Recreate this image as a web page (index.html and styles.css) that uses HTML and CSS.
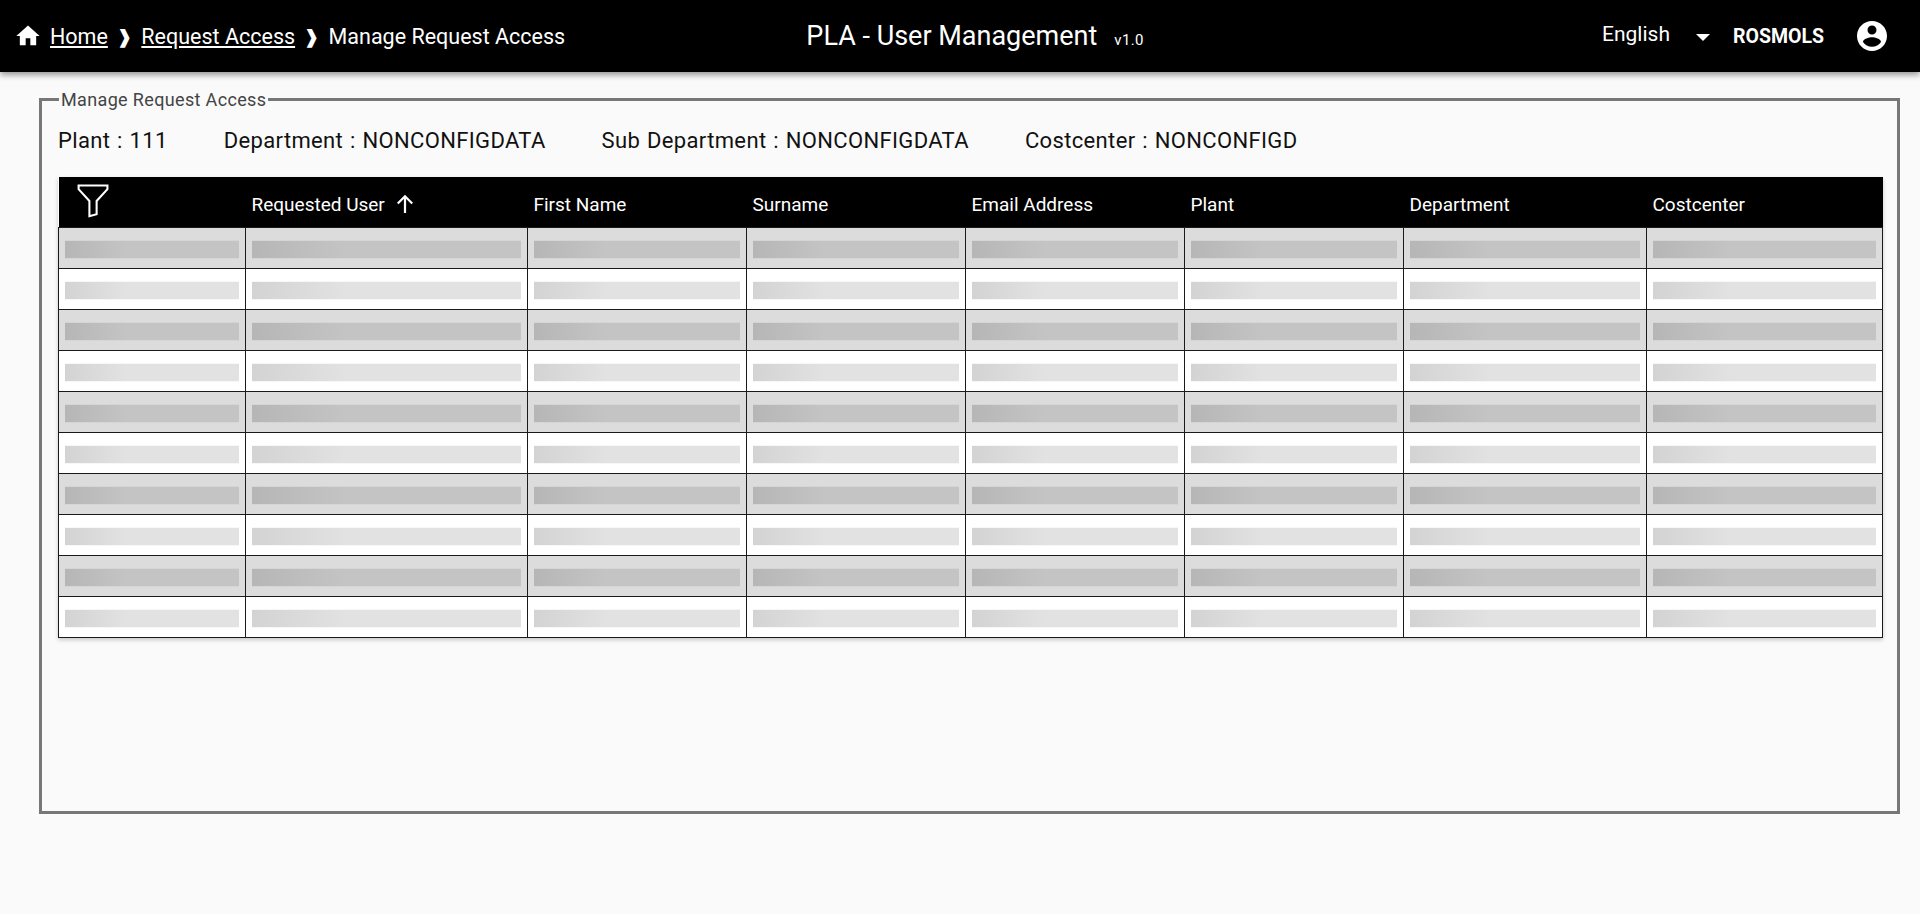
FILE: index.html
```html
<!DOCTYPE html>
<html lang="en">
<head>
<meta charset="utf-8">
<title>PLA - User Management</title>
<link rel="stylesheet" href="styles.css">
</head>
<body>
<header class="topbar">
  <nav class="crumbs">
    <svg class="home" viewBox="0 0 24 24"><path d="M10 20v-6h4v6h5v-8h3L12 3 2 12h3v8z"/></svg>
    <a class="crumb-link" href="#">Home</a>
    <span class="sep">❱</span>
    <a class="crumb-link" href="#">Request Access</a>
    <span class="sep">❱</span>
    <span>Manage Request Access</span>
  </nav>
  <div class="title"><span class="title-main">PLA - User Management</span><span class="version">v1.0</span></div>
  <div class="user">
    <span class="lang">English</span>
    <span class="caret"></span>
    <span class="uname">ROSMOLS</span>
    <svg class="avatar" viewBox="0 0 24 24"><path d="M12 2C6.48 2 2 6.48 2 12s4.480 10 10 10 10-4.480 10-10S17.520 2 12 2zm0 3c1.660 0 3 1.340 3 3s-1.340 3-3 3-3-1.340-3-3 1.340-3 3-3zm0 14.200c-2.500 0-4.710-1.280-6-3.220.03-1.990 4-3.080 6-3.080 1.990 0 5.970 1.090 6 3.080-1.290 1.940-3.500 3.220-6 3.220z"/></svg>
  </div>
</header>
<main class="content">
  <fieldset class="panel">
    <legend class="panel-legend">Manage Request Access</legend>
    <div class="info">
      <span>Plant : 111</span>
      <span>Department : NONCONFIGDATA</span>
      <span>Sub Department : NONCONFIGDATA</span>
      <span>Costcenter : NONCONFIGD</span>
    </div>
    <table class="grid">
      <colgroup>
        <col class="c1"><col class="c2"><col class="c3"><col class="c4"><col class="c5"><col class="c6"><col class="c7"><col class="c8">
      </colgroup>
      <thead>
        <tr>
          <th><svg class="filter" viewBox="0 0 32 34"><path d="M2.500 2.500h28v3.500L20 17.500v12.800l-7 2V17.500L2.500 6z"/></svg></th>
          <th>Requested User <svg class="arrow" viewBox="0 0 18 18"><path d="M9 17V2M2.500 8.500 9 2l6.500 6.500"/></svg></th>
          <th>First Name</th><th>Surname</th><th>Email Address</th><th>Plant</th><th>Department</th><th>Costcenter</th>
        </tr>
      </thead>
      <tbody>
        <tr><td><i></i></td><td><i></i></td><td><i></i></td><td><i></i></td><td><i></i></td><td><i></i></td><td><i></i></td><td><i></i></td></tr>
        <tr><td><i></i></td><td><i></i></td><td><i></i></td><td><i></i></td><td><i></i></td><td><i></i></td><td><i></i></td><td><i></i></td></tr>
        <tr><td><i></i></td><td><i></i></td><td><i></i></td><td><i></i></td><td><i></i></td><td><i></i></td><td><i></i></td><td><i></i></td></tr>
        <tr><td><i></i></td><td><i></i></td><td><i></i></td><td><i></i></td><td><i></i></td><td><i></i></td><td><i></i></td><td><i></i></td></tr>
        <tr><td><i></i></td><td><i></i></td><td><i></i></td><td><i></i></td><td><i></i></td><td><i></i></td><td><i></i></td><td><i></i></td></tr>
        <tr><td><i></i></td><td><i></i></td><td><i></i></td><td><i></i></td><td><i></i></td><td><i></i></td><td><i></i></td><td><i></i></td></tr>
        <tr><td><i></i></td><td><i></i></td><td><i></i></td><td><i></i></td><td><i></i></td><td><i></i></td><td><i></i></td><td><i></i></td></tr>
        <tr><td><i></i></td><td><i></i></td><td><i></i></td><td><i></i></td><td><i></i></td><td><i></i></td><td><i></i></td><td><i></i></td></tr>
        <tr><td><i></i></td><td><i></i></td><td><i></i></td><td><i></i></td><td><i></i></td><td><i></i></td><td><i></i></td><td><i></i></td></tr>
        <tr><td><i></i></td><td><i></i></td><td><i></i></td><td><i></i></td><td><i></i></td><td><i></i></td><td><i></i></td><td><i></i></td></tr>
      </tbody>
    </table>
  </fieldset>
</main>
</body>
</html>
```
FILE: styles.css
```css
* { box-sizing: border-box; }
html, body { margin: 0; height: 100%; }
body { background: #fafafa; font-family: Roboto, "Noto Sans", sans-serif; color: #111; overflow: hidden; }

.topbar {
  height: 72px; background: #000; color: #fff;
  display: grid; grid-template-columns: 1fr auto 1fr; align-items: center;
  padding: 0 30px 0 14px;
  box-shadow: 0 3px 6px rgba(0,0,0,.4);
  position: relative;
}
.crumbs { display: flex; align-items: center; font-size: 21.500px; }
.crumb-link { color: #fff; }
.home { width: 28px; height: 28px; fill: #fff; margin-right: 8px; }
.sep { font-size: 18px; font-weight: 700; margin: 0 9.500px 0 9px; }
.title { font-size: 27px; display: flex; align-items: baseline; margin-left: 46px; }
.version { font-size: 15px; margin-left: 17px; letter-spacing: .3px; }
.user { display: flex; align-items: center; justify-content: flex-end; }
.lang { font-size: 21px; margin-top: -4px; }
.caret { width: 0; height: 0; border: 7.500px solid transparent; border-top: 7.500px solid #fff; border-bottom: 0; margin: 2px 0 0 26px; }
.uname { font-size: 19.500px; font-weight: 700; margin: 0 30px 0 23px; }
.avatar { width: 36px; height: 36px; fill: #fff; }

.content { padding: 19px 20px 0 39px; }
.panel { margin: 0; padding: 0 16px; height: 723px; border: 3px solid #777; min-width: 0; }
.panel-legend { font-size: 18px; padding: 0 2px; margin-left: 1px; color: #444; line-height: 17px; letter-spacing: .35px; }
.info { display: flex; gap: 56px; font-size: 22px; height: 44px; align-items: center; margin-top: 10px; margin-bottom: 15px; letter-spacing: .35px; word-spacing: 1px; }

.grid { width: 1824px; table-layout: fixed; border-collapse: collapse; box-shadow: 0 2px 4px rgba(0,0,0,.2); background: #fff; }
.c1 { width: 187px; } .c2 { width: 282px; } .c3, .c4, .c5, .c6 { width: 219px; } .c7 { width: 243px; } .c8 { width: 236px; }
.grid th { height: 50px; background: #000; color: #fff; font-size: 19px; font-weight: 400; text-align: left; padding: 5px 6px 0; }
.grid td { height: 41px; border: 1.500px solid #1a1a1a; padding: 3px 6px 0; }
.grid i { display: block; height: 17px; background: linear-gradient(90deg, #b6b6b6 0, #c4c4c4 35%, #c4c4c4 100%); box-shadow: 0 -1px 0 rgba(0,0,0,.03), 0 1px 0 rgba(0,0,0,.03); }
.grid tbody tr:nth-child(odd) { background: #dcdcdc; }
.grid tbody tr:nth-child(even) i { background: linear-gradient(90deg, #d3d3d3 0, #e2e2e2 35%, #e2e2e2 100%); }
.filter { display: block; width: 33px; height: 35px; margin: -7px 0 0 11px; fill: none; stroke: #fff; stroke-width: 2; }
.arrow { width: 20px; height: 20px; fill: none; stroke: #fff; stroke-width: 2; vertical-align: -3px; margin-left: 5px; }
```
